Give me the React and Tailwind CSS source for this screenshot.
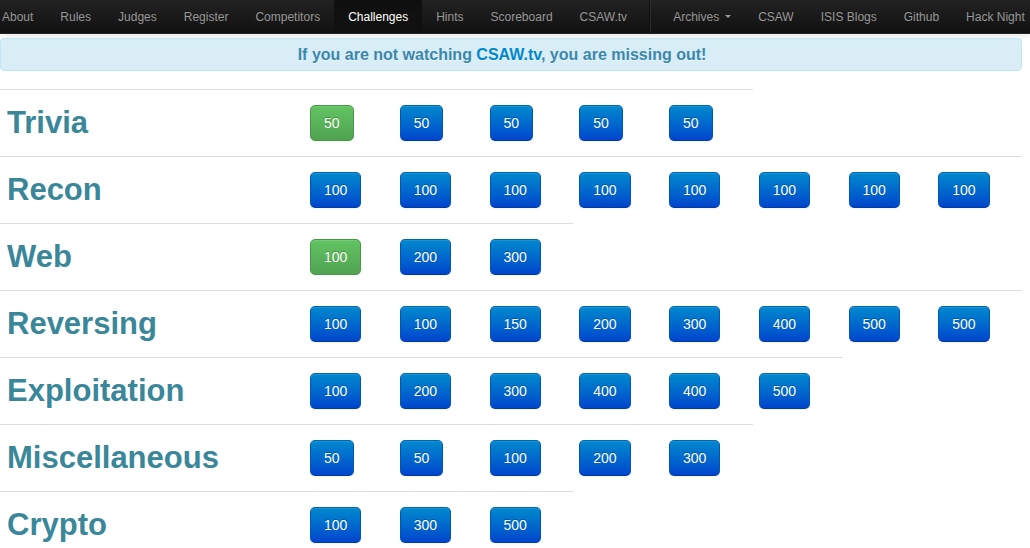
const mainLinks = [
  'About',
  'Rules',
  'Judges',
  'Register',
  'Competitors',
  'Challenges',
  'Hints',
  'Scoreboard',
  'CSAW.tv',
];

const moreLinks = ['CSAW', 'ISIS Blogs', 'Github', 'Hack Night'];

const categories = [
  { name: 'Trivia', points: [50, 50, 50, 50, 50], solved: [0] },
  { name: 'Recon', points: [100, 100, 100, 100, 100, 100, 100, 100], solved: [] },
  { name: 'Web', points: [100, 200, 300], solved: [0] },
  { name: 'Reversing', points: [100, 100, 150, 200, 300, 400, 500, 500], solved: [] },
  { name: 'Exploitation', points: [100, 200, 300, 400, 400, 500], solved: [] },
  { name: 'Miscellaneous', points: [50, 50, 100, 200, 300], solved: [] },
  { name: 'Crypto', points: [100, 300, 500], solved: [] },
];

const itemClass =
  'flex h-full items-center px-[13px] text-[#999] [text-shadow:0_-1px_0_rgba(0,0,0,0.25)]';
const activeClass =
  'flex h-full items-center bg-[#111] px-[14px] text-white shadow-[inset_0_3px_8px_rgba(0,0,0,0.125)]';

function NavBar() {
  return (
    <nav className="flex h-[34px] overflow-hidden whitespace-nowrap border-b border-[#252525] bg-linear-to-b from-[#222] to-[#111] text-[12px] leading-4">
      <ul className="-ml-[11px] flex h-full shrink-0 gap-px">
        {mainLinks.map((label) => (
          <li key={label}>
            <a
              href="#"
              aria-current={label === 'Challenges' ? 'page' : undefined}
              className={label === 'Challenges' ? activeClass : itemClass}
            >
              {label}
            </a>
          </li>
        ))}
      </ul>
      <div className="mx-[9px] h-full w-[2px] shrink-0 border-l border-r border-l-[#111] border-r-[#2a2a2a]" />
      <ul className="flex h-full shrink-0 gap-px">
        <li>
          <button type="button" className={itemClass}>
            Archives
            <span className="ml-[6px] border-x-[3px] border-t-[3px] border-x-transparent border-t-[#999]" />
          </button>
        </li>
        {moreLinks.map((label) => (
          <li key={label}>
            <a href="#" className={itemClass}>
              {label}
            </a>
          </li>
        ))}
      </ul>
    </nav>
  );
}

function PointsButton({ value, solved }) {
  const base =
    'block h-9 rounded-[5px] border px-[13px] text-[14px] leading-5 text-white [text-shadow:0_-1px_0_rgba(0,0,0,0.25)] shadow-[inset_0_1px_0_rgba(255,255,255,0.1),0_1px_2px_rgba(0,0,0,0.05)]';
  return (
    <button
      type="button"
      className={
        solved
          ? `${base} border-[#4b954b] bg-linear-to-b from-[#62c462] to-[#51a351]`
          : `${base} border-x-[#0058b4] border-t-[#0066b4] border-b-[#003ca0] bg-linear-to-b from-[#0088cc] to-[#0044cc]`
      }
    >
      {value}
    </button>
  );
}

export default function App() {
  return (
    <div className="min-h-screen bg-white font-['Liberation_Sans',Arial,sans-serif] text-[#333]">
      <header className="shadow-[0_1px_8px_rgba(0,0,0,0.12)]">
        <NavBar />
      </header>
      <main className="mr-2 pt-1">
        <div className="rounded-[4px] border border-[#bce8f1] bg-[#d9edf7] py-[5px] pl-[14px] pr-8 text-center text-[16px] font-bold leading-[21px] text-[#3a87ad] [text-shadow:0_1px_0_rgba(255,255,255,0.5)]">
          If you are not watching{' '}
          <a href="#" className="text-[#0088cc]">
            CSAW.tv
          </a>
          , you are missing out!
        </div>
        <table className="mt-[18px] w-full table-fixed border-separate border-spacing-0">
          <colgroup>
            <col className="w-[304px]" />
            <col span={8} />
          </colgroup>
          <tbody>
            {categories.map(({ name, points, solved }) => (
              <tr key={name} className="h-[67px]">
                <th
                  scope="row"
                  className="border-t border-[#ddd] p-0 pl-[7px] text-left align-middle text-[31px] font-bold leading-9 text-[#3a8799]"
                >
                  {name}
                </th>
                {points.map((value, i) => (
                  <td key={i} className="border-t border-[#ddd] p-0 pl-[6px] align-middle">
                    <PointsButton value={value} solved={solved.includes(i)} />
                  </td>
                ))}
              </tr>
            ))}
          </tbody>
        </table>
      </main>
    </div>
  );
}
